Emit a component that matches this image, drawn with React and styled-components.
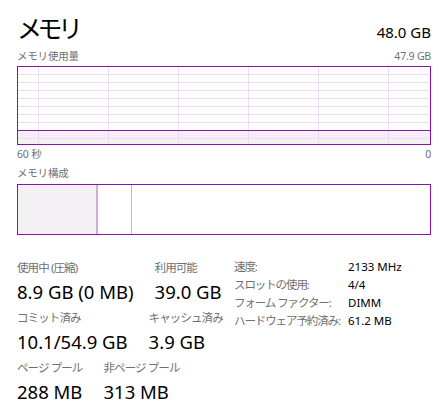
import React from 'react';
import styled, { createGlobalStyle } from 'styled-components';

const purple = 'rgb(139, 18, 174)';
const font = '"Segoe UI", "Noto Sans", "Noto Sans CJK JP", sans-serif';

const GlobalStyle = createGlobalStyle`
  html, body {
    margin: 0;
    padding: 0;
    background: #fff;
  }
  body {
    font-family: ${font};
    color: #000;
  }
`;

const Page = styled.div`
  width: 440px;
  height: 413px;
  box-sizing: border-box;
  padding: 9px 9px 0 17px;
  overflow: hidden;
`;

const Header = styled.div`
  display: flex;
  justify-content: space-between;
  align-items: baseline;
  height: 40px;
`;

const Title = styled.div`
  font-size: 25px;
  line-height: 36px;
  letter-spacing: -4.5px;
  font-family: "Noto Sans CJK JP", sans-serif;
`;

const Total = styled.div`
  font-size: 15px;
  line-height: 20px;
`;

const CaptionRow = styled.div`
  display: flex;
  justify-content: space-between;
  margin-top: ${p => p.$top || 0}px;
`;

const Caption = styled.div`
  font-size: 10.5px;
  line-height: 14px;
  color: #707070;
  letter-spacing: -0.2px;
  margin-top: ${p => p.$top || 0}px;
`;

const Graph = styled.div`
  margin-top: 3px;
  height: 79px;
  svg {
    display: block;
  }
`;

const CompBar = styled.div`
  margin-top: 4px;
  height: 51px;
  box-sizing: border-box;
  border: 1px solid ${purple};
  display: flex;
`;

const Segment = styled.div`
  width: ${p => p.$w}px;
  flex: ${p => (p.$w ? 'none' : '1')};
  background: ${p => p.$fill || '#fff'};
  border-right: ${p => (p.$sep ? `${p.$sep}px solid #cfaed9` : 'none')};
`;

const Details = styled.div`
  margin-top: 25px;
  display: flex;
  align-items: flex-start;
`;

const Stats = styled.div`
  display: flex;
  flex-direction: column;
  gap: 6px;
  width: 217px;
`;

const StatRow = styled.div`
  display: flex;
  gap: 21px;
`;

const Stat = styled.div`
  display: flex;
  flex-direction: column;
  gap: 4px;
`;

const StatLabel = styled.div`
  font-size: 11.5px;
  line-height: 16px;
  color: #707070;
  letter-spacing: -0.9px;
  white-space: nowrap;
`;

const StatValue = styled.div`
  font-size: 18.5px;
  line-height: 24px;
  white-space: nowrap;
`;

const InfoGrid = styled.div`
  display: grid;
  grid-template-columns: 114px auto;
  grid-auto-rows: 18px;
  margin-top: -2px;
  font-size: 11.5px;
  line-height: 18px;
`;

const InfoLabel = styled.div`
  color: #707070;
  white-space: nowrap;
  letter-spacing: -1.1px;
`;

const InfoValue = styled.div`
  color: #000;
  white-space: nowrap;
`;

const UsageGraph = () => {
  const w = 414;
  const h = 79;
  const verticals = [21, 91, 161, 231, 301, 371];
  const horizontals = [];
  for (let y = 8; y < h - 1; y += 8) horizontals.push(y + 0.5);
  return (
    <svg width={w} height={h} viewBox={`0 0 ${w} ${h}`}>
      <rect x="0" y="64" width={w} height={h - 64} fill="#f3eff4" />
      {horizontals.map(y => (
        <line key={y} x1="1" x2={w - 2} y1={y} y2={y} stroke="#ecdcf1" strokeWidth="1" />
      ))}
      {verticals.map(x => (
        <line key={x} x1={x + 0.5} x2={x + 0.5} y1="1" y2={h - 1} stroke="#ecdcf1" strokeWidth="1" />
      ))}
      <line x1="0" x2={w} y1="64.5" y2="64.5" stroke={purple} strokeWidth="1" />
      <rect x="0.5" y="0.5" width={w - 1} height={h - 1} fill="none" stroke={purple} strokeWidth="1" />
    </svg>
  );
};

const stats = [
  [
    { label: '使用中 (圧縮)', value: '8.9 GB (0 MB)' },
    { label: '利用可能', value: '39.0 GB' },
  ],
  [
    { label: 'コミット済み', value: '10.1/54.9 GB' },
    { label: 'キャッシュ済み', value: '3.9 GB' },
  ],
  [
    { label: 'ページ プール', value: '288 MB' },
    { label: '非ページ プール', value: '313 MB' },
  ],
];

const info = [
  ['速度:', '2133 MHz'],
  ['スロットの使用:', '4/4'],
  ['フォーム ファクター:', 'DIMM'],
  ['ハードウェア予約済み:', '61.2 MB'],
];

export default function App() {
  return (
    <>
      <GlobalStyle />
      <Page>
        <Header>
          <Title>メモリ</Title>
          <Total>48.0 GB</Total>
        </Header>
        <CaptionRow>
          <Caption>メモリ使用量</Caption>
          <Caption>47.9 GB</Caption>
        </CaptionRow>
        <Graph>
          <UsageGraph />
        </Graph>
        <CaptionRow $top={2}>
          <Caption>60 秒</Caption>
          <Caption>0</Caption>
        </CaptionRow>
        <Caption $top={5}>メモリ構成</Caption>
        <CompBar>
          <Segment $w={78} $fill="#f3f0f4" $sep={2} />
          <Segment $w={33} $sep={1} />
          <Segment />
        </CompBar>
        <Details>
          <Stats>
            {stats.map((row, i) => (
              <StatRow key={i}>
                {row.map(s => (
                  <Stat key={s.label}>
                    <StatLabel>{s.label}</StatLabel>
                    <StatValue>{s.value}</StatValue>
                  </Stat>
                ))}
              </StatRow>
            ))}
          </Stats>
          <InfoGrid>
            {info.map(([k, v]) => (
              <React.Fragment key={k}>
                <InfoLabel>{k}</InfoLabel>
                <InfoValue>{v}</InfoValue>
              </React.Fragment>
            ))}
          </InfoGrid>
        </Details>
      </Page>
    </>
  );
}
